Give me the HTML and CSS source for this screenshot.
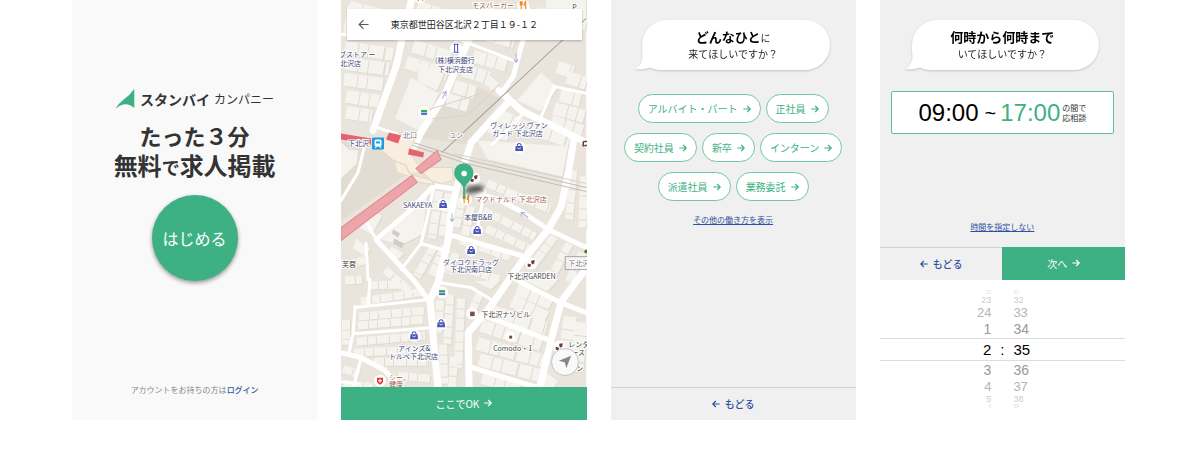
FILE: index.html
```html
<!DOCTYPE html>
<html lang="ja">
<head>
<meta charset="utf-8">
<meta name="viewport" content="width=device-width, initial-scale=1">
<title>スタンバイ カンパニー</title>
<link rel="stylesheet" href="styles.css">
</head>
<body>
<svg class="defs" aria-hidden="true">
  <symbol id="arrow" viewBox="0 0 8 8"><path d="M.3 4H7.2M4.2 1L7.2 4L4.2 7" fill="none" stroke="currentColor" stroke-width="1.2"/></symbol>
  <symbol id="arrow-back" viewBox="0 0 8 8"><path d="M7.7 4H.8M3.8 1L.8 4L3.8 7" fill="none" stroke="currentColor" stroke-width="1.2"/></symbol>
</svg>
<main class="screens">

  <section class="screen screen-start">
    <div class="intro">
      <div class="brand">
        <svg class="brand-mark" viewBox="0 0 20 20" aria-hidden="true"><path d="M19.3 0V19Q14.5 14.4 9 15.3Q5 16 .3 19.7Q3.500 14.500 9 10.200Q15 6 19.300 0Z" fill="#3eb184"/></svg>
        <span class="brand-name">スタンバイ</span>
        <span class="brand-sub">カンパニー</span>
      </div>
      <h1 class="headline"><span class="headline-top">たった３分</span><span>無料<small>で</small>求人掲載</span></h1>
      <button class="start" type="button">はじめる</button>
    </div>
    <p class="login">アカウントをお持ちの方は<a href="#login">ログイン</a></p>
  </section>

  <section class="screen screen-map">
    <div class="map">
      <svg class="map-canvas" viewBox="0 0 245 388" preserveAspectRatio="xMidYMid slice" role="img" aria-label="下北沢周辺の地図">
        <defs>
          <g id="bag"><circle r="6" fill="#fff"/><path d="M-3.500-1.500H3.500L4 3.500H-4Z" fill="#4b53b5"/><path d="M-1.800-1.500V-3Q0-5 1.800-3V-1.500" fill="none" stroke="#4b53b5"/><path d="M-1.800.2Q0 2.600 1.800.2" fill="none" stroke="#fff" stroke-width=".8"/></g>
          <g id="store"><circle r="6" fill="#fff"/><path d="M-3-2.500H3V0H-3Z" fill="#35a852"/><path d="M-3 0H3V2.500H-3Z" fill="#476ac6"/><path d="M-3 .2H3" stroke="#dce9ff" stroke-width=".7"/></g>
          <g id="food"><circle r="6" fill="#fff"/><path d="M-3-4V-1Q-2 .3-1-1V-4M-2-4V4M2.500 4V-4Q.5-2 1 0H2.500" fill="none" stroke="#f08a24" stroke-width="1.100"/></g>
          <g id="mask"><circle r="6" fill="#fff"/><path d="M-3.500 0L0 1L-1 3.500L-3.500 3.200ZM0-2.800L3.500-3.500L3 0L1 1L0-1Z" fill="#6d3c38"/></g>
        </defs>
        <rect width="245" height="388" fill="#e9e4dc"/>

        <path class="land" d="M0 140L22 137L52 150L65 175L0 222ZM92 108L132 85L160 100L125 145L78 138Z"/>

        <g class="houses">
          <path class="row-l" d="M8 8L60 21M4 48L52 55M4 64L48 70M3 80L42 85M5 97L38 102M5 113L31 117"/>
          <path class="row-l" d="M76 8L119 21M75 25L118 37M72 47L110 58M65 63L106 75"/>
          <path class="row-l" d="M134 12L176 23M132 31L173 43M132 57L165 66M122 71L148 79M113 87L134 93M106 100L127 106"/>
          <path class="row-l" d="M195 14L245 25M190 29L210 33M216 68L232 73M226 78L245 84M219 96L239 101M213 109L243 117M210 122L241 132M187 128L228 142"/>
          <path class="row-l" d="M158 116L184 128M149 127L168 136"/>
          <path class="row-m" d="M98 192L91 239M108 194L101 237M121 199L115 228M130 207L124 236"/>
          <path class="row-m" d="M146 184L209 210M142 211L194 237M145 229L190 250M119 241L170 258"/>
          <path class="row-m" d="M232 171L228 220M243 177L241 228M213 237L190 268M228 244L211 276M241 253L227 284"/>
          <path class="row-m" d="M6 266L25 260M4 281L21 280M27 286L64 285M44 270L71 294"/>
          <path class="row-m" d="M93 246L76 277M103 247L91 276M115 254L107 274M130 271L158 280"/>
          <path class="row-m" d="M20 302L84 292M18 317L83 311M17 326L83 320M16 342L84 336M13 353L83 350M33 362L87 362M57 376L89 379"/>
          <path class="row-m" d="M99 301L97 334M109 295L106 344M120 299L117 368M102 345L103 384M113 357L111 387"/>
          <path class="row-l" d="M151 312L205 329M140 326L200 345M136 344L204 362M138 360L199 376M141 378L182 388"/>
          <path class="row-l" d="M176 289L210 304M171 301L205 318M229 317L223 360M241 323L235 372M212 378L204 388"/>
          <path class="row-m" d="M5 320L5 345M2 369L18 375M3 384L31 388M139 293L128 318"/>
          <path class="block" d="M70 78L98 94L79 132L54 119ZM77 63L103 74L96 91L77 82ZM200 73L217 88L199 112L176 101ZM149 76L158 84L151 91L144 85ZM136 141L227 147L221 177L147 160ZM88 187L81 235L59 246L40 240L68 216ZM0 143L8 150L17 151L16 164L0 179ZM29 211L41 216L31 235L19 229ZM15 239L29 250L24 257L12 249ZM50 247L63 254L55 262L47 254ZM182 280L206 292L217 280L208 270ZM205 0H245V22L204 15ZM7 6L33 10L26 38L2 34ZM133 282L150 290L160 280Z"/>
        </g>

        <g class="roads">
          <path class="road-w" d="M71-2L61 40L55 67L43 100L32 131M128 40L118 62L103 97L80 133L73 147M158 91L180 111L245 143M233 138L227 173L220 207L207 230L180 263L147 310L127 333L128 390M244 270L220 302L210 340L198 390M165 105L130 143L123 165L115 190L110 213L107 240L97 283L89 300L93 347L97 390"/>
          <path class="road-m" d="M187 10L182 40L172 77L160 94M123 190L157 200L182 213L207 230L245 248M92 187L67 213L35 240L72 280L88 301M108 235L180 256M140 315L207 340M175 280L217 302L245 313M128 367L200 389M0 353L20 358L43 370L62 390M92 186L116 190"/>
          <path class="road-s" d="M0 35L60 40M115 39L172 61M245 94L213 87L200 117M32 127L74 140M0 201L17 173L23 149M93 187L80 244L60 270M80 244L107 252M97 283L130 288L150 300M14 308L88 300M29 280L27 305M14 307L12 334L8 353M12 334L90 328M0 382L17 384M20 358L12 390M35 240L24 220M25 244L27 280M182 114L167 130L151 145M144 190L136 229"/>
        </g>

        <path class="rail" d="M245 19L222 40L101 153"/>
        <path class="rail-light" d="M63 140L125 160L245 188M66 144L125 164L245 192"/>
        <path class="rail-faint" d="M153 91L126 116L91 119M88 110L140 94M112 154L245 184"/>
        <path class="station" d="M30 142L59 134L74 140L68 152L79 168L111 168L112 181L100 184L90 181L82 173L69 174L65 166L51 160Z"/>
        <path class="station" d="M53 161L64 166L69 175L89 180L93 185L79 183L68 177L56 173Z"/>
        <path class="platform" d="M0 228L71 176L76 183L0 241ZM75 169L96 151L100 160L80 174Z"/>
        <path class="platform-red" d="M0 134L30 139V145L0 140ZM48 133L60 136L57 144L45 140ZM68 149L83 153L82 158L67 155Z"/>
        <path d="M52 230L59 234L57 238L51 234ZM53 239L63 244L61 249L52 244Z" fill="#cfcdca"/>
        <g class="oneway"><path d="M175 54V63M173 60L175 63L177 60M101 99L105 92M101 94L105 92V97M111 214V222M109 219L111 222L113 219M180 213L187 218M180 217V213H184"/></g>

        <g class="pois">
          <use href="#bag" x="178" y="148"/><use href="#bag" x="102" y="205"/><use href="#bag" x="136" y="231"/><use href="#bag" x="130" y="251"/><use href="#bag" x="100" y="324"/><use href="#bag" x="73" y="336"/>
          <use href="#store" x="83" y="113"/><use href="#store" x="101" y="293"/>
          <use href="#food" x="182" y="6"/><use href="#food" x="79" y="-2"/><use href="#food" x="125" y="200"/>
          <use href="#mask" x="133" y="179"/><use href="#mask" x="190" y="264"/><use href="#mask" x="218" y="347"/>
          <circle cx="115" cy="49" r="6" fill="#fff"/><path d="M112.500 45H117.500M112.500 53H117.500M113.500 45.500V52.500M116.500 45.500V52.500" stroke="#4b53b5" fill="none"/>
          <circle cx="131" cy="314" r="6" fill="#fff"/><path d="M129 312H133.500V316.500H129Z" fill="#7a4b44"/>
          <circle cx="169" cy="337" r="5" fill="#fff"/><path d="M168 336H171V339H168Z" fill="#7a4b44"/>
          <circle cx="39" cy="381" r="6" fill="#fff"/><path d="M36 378H42V382Q41 384 39 385Q37 384 36 382Z" fill="#db3333"/><path d="M39 379V383M37 381H41" stroke="#fff"/>
          <rect x="31" y="138" width="12" height="12" rx="1" fill="#1a9de0"/><rect x="33.500" y="140" width="7" height="7" rx="1.500" fill="#fff"/><path d="M35 142H39V144H35Z" fill="#1a9de0"/><path d="M34 148.500L36 146.500M40 148.500L38 146.500" stroke="#fff"/>
          <rect x="224" y="257" width="24" height="13" fill="#f0efed" stroke="#aaa"/>
          <path d="M242 142H246M243 146H246M242 142V147" stroke="#6d3c38" stroke-width="1.500"/>
          <circle cx="245" cy="252" r="2" fill="#557a37"/>
        </g>

        <g class="labels">
          <text class="lb-food" x="131" y="9">モスバーガー</text>
          <text class="lb-dark" x="231" y="11">P</text>
          <text x="-2" y="58">ブストア ー</text><text x="-1" y="67">北沢店</text>
          <text x="94" y="64">(株)横浜銀行</text><text x="97" y="73">下北沢支店</text>
          <text class="lb-grey" x="62" y="139">北口</text><text class="lb-grey" x="108" y="139">ユン</text>
          <text x="149" y="129">ヴィレッジ ヴァン</text><text x="151" y="137">ガード 下北沢店</text>
          <text x="7" y="147">下北沢</text>
          <text x="62" y="208">SAKAEYA</text>
          <text class="lb-food" x="134" y="202">マクドナルド 下北沢店</text>
          <text x="123" y="220">本屋B&amp;B</text>
          <text x="102" y="265">ダイコクドラッグ</text><text x="109" y="272">下北沢南口店</text>
          <text class="lb-dark" x="1" y="267">芙蓉</text>
          <text class="lb-dark" x="166" y="279">下北沢GARDEN</text>
          <text class="lb-grey" x="227" y="266">下北沢</text>
          <text class="lb-dark" x="140" y="317">下北沢ナゾビル</text>
          <text class="lb-dark" x="152" y="351">Comodo・1</text>
          <text x="57" y="351">アインズ&amp;</text><text x="48" y="359">トルペ下北沢店</text>
          <text class="lb-dark" x="227" y="347">レンタ</text><text class="lb-dark" x="230" y="355">ース</text><text class="lb-dark" x="235" y="371">ン</text>
          <text class="lb-food" x="48" y="380">シー、</text><text class="lb-food" x="48" y="387">健康</text>
        </g>

        <ellipse class="pin-shadow" cx="133" cy="190" rx="10" ry="4" transform="rotate(-10 133 190)"/>
        <path d="M123 199V186" stroke="#3eb184" stroke-width="2"/>
        <path d="M122.500 190C122 183 113 181 113 173.500A9.700 9.700 0 0 1 132.400 173.500C132.400 181 124 183 123.500 190Z" fill="#3eb184"/>
        <circle cx="123" cy="174" r="2.800" fill="#fff"/>
      </svg>
      <div class="address">
        <button class="address-back" type="button" aria-label="戻る"><svg viewBox="0 0 12 12" aria-hidden="true"><path d="M11.500 6H1.200M6 1.200L1.200 6L6 10.800" fill="none" stroke="#5f5558" stroke-width="1.200"/></svg></button>
        <input class="address-input" type="text" aria-label="住所" value="東京都世田谷区北沢２丁目１９-１２">
      </div>
      <button class="locate" type="button" aria-label="現在地"><svg viewBox="0 0 14 14" aria-hidden="true"><path d="M13.200.8L8.300 13L6.800 7.200L.8 5.700Z" fill="#85858a"/></svg></button>
    </div>
    <button class="bar bar-primary" type="button">ここでOK<svg class="ico" aria-hidden="true"><use href="#arrow"/></svg></button>
  </section>

  <section class="screen screen-form">
    <div class="form-body">
      <h2 class="bubble">
        <svg class="bubble-tail" viewBox="0 0 32 24" aria-hidden="true"><path d="M7 0L7.500 11Q6.500 19 0 21.500Q7 23.500 15 20.500Q21 23.500 32 23L32 0Z" fill="#fff"/></svg>
        <span class="bubble-text"><span><strong>どんなひと</strong>に</span><span>来てほしいですか？</span></span>
      </h2>
      <div class="choices">
        <button class="pill" type="button">アルバイト・パート<svg class="ico" aria-hidden="true"><use href="#arrow"/></svg></button>
        <button class="pill" type="button">正社員<svg class="ico" aria-hidden="true"><use href="#arrow"/></svg></button>
        <button class="pill" type="button">契約社員<svg class="ico" aria-hidden="true"><use href="#arrow"/></svg></button>
        <button class="pill" type="button">新卒<svg class="ico" aria-hidden="true"><use href="#arrow"/></svg></button>
        <button class="pill" type="button">インターン<svg class="ico" aria-hidden="true"><use href="#arrow"/></svg></button>
        <button class="pill" type="button">派遣社員<svg class="ico" aria-hidden="true"><use href="#arrow"/></svg></button>
        <button class="pill" type="button">業務委託<svg class="ico" aria-hidden="true"><use href="#arrow"/></svg></button>
      </div>
      <a class="sublink" href="#more">その他の働き方を表示</a>
    </div>
    <button class="bar bar-back" type="button"><svg class="ico" aria-hidden="true"><use href="#arrow-back"/></svg>もどる</button>
  </section>

  <section class="screen screen-form">
    <div class="form-body form-time">
      <h2 class="bubble">
        <svg class="bubble-tail" viewBox="0 0 32 24" aria-hidden="true"><path d="M7 0L7.500 11Q6.500 19 0 21.500Q7 23.500 15 20.500Q21 23.500 32 23L32 0Z" fill="#fff"/></svg>
        <span class="bubble-text"><span><strong>何時から何時まで</strong></span><span>いてほしいですか？</span></span>
      </h2>
      <div class="range">
        <span class="range-time">09:00</span>
        <span class="range-sep">~</span>
        <span class="range-time range-active">17:00</span>
        <span class="range-note">の間で<br>応相談</span>
      </div>
      <a class="sublink sublink-end" href="#any">時間を指定しない</a>
    </div>
    <div class="bar-pair">
      <button class="bar bar-back" type="button"><svg class="ico" aria-hidden="true"><use href="#arrow-back"/></svg>もどる</button>
      <button class="bar bar-primary" type="button">次へ<svg class="ico" aria-hidden="true"><use href="#arrow"/></svg></button>
    </div>
    <div class="picker" role="group" aria-label="時刻">
      <div class="tick tick-4"><span>22</span><span>31</span></div>
      <div class="tick tick-3"><span>23</span><span>32</span></div>
      <div class="tick tick-2"><span>24</span><span>33</span></div>
      <div class="tick tick-1"><span>1</span><span>34</span></div>
      <div class="tick tick-now"><span>2</span><b>:</b><span>35</span></div>
      <div class="tick tick-1"><span>3</span><span>36</span></div>
      <div class="tick tick-2"><span>4</span><span>37</span></div>
      <div class="tick tick-3"><span>5</span><span>38</span></div>
      <div class="tick tick-4"><span>6</span><span>39</span></div>
    </div>
  </section>

</main>
</body>
</html>
```
FILE: styles.css
```css
:root {
  --green: #3eb184;
  --blue: #2f52a0;
  --line: #dcdcdc;
}
* { box-sizing: border-box; }
body {
  margin: 0;
  background: #fff;
  color: #333;
  font: 10px/1.5 "Noto Sans CJK JP", sans-serif;
}
button, input { font: inherit; color: inherit; border: 0; padding: 0; margin: 0; background: none; }
button { cursor: pointer; }
h1, h2, p { margin: 0; font-size: 10px; font-weight: 400; }
a { color: var(--blue); }
.defs { position: absolute; width: 0; height: 0; }
.ico { width: 8px; height: 8px; flex: none; }

.screens {
  display: grid;
  grid-template-columns: repeat(4, minmax(0, 1fr));
  gap: 24px;
  padding: 0 75px 48px 72px;
}
.screen { display: flex; flex-direction: column; min-height: 420px; }

/* start */
.screen-start { background: #f9f9f9; align-items: center; justify-content: space-between; padding: 87px 0 22px; }
.intro { display: flex; flex-direction: column; align-items: center; }
.brand { display: flex; align-items: center; line-height: 24px; }
.brand-mark { width: 20px; height: 20px; margin-right: 5px; }
.brand-name { font-size: 14px; font-weight: 700; margin-right: 4px; }
.brand-sub { font-size: 12px; }
.headline { display: flex; flex-direction: column; align-items: center; margin-top: 10px; font-size: 24px; font-weight: 700; line-height: 29px; }
.headline-top { font-size: 22px; }
.headline small { font-size: 18px; }
.start {
  width: 86px; height: 86px; margin-top: 13px; border-radius: 50%;
  background: var(--green); color: #fff; font-size: 16px;
  box-shadow: 0 2px 4px rgba(0, 0, 0, .4);
}
.login { font-size: 8px; line-height: 16px; color: #888; }
.login a { font-weight: 500; text-decoration: none; }

/* map */
.map { position: relative; flex: 1; overflow: hidden; }
.map-canvas { position: absolute; inset: 0; width: 100%; height: 100%; }
.land { fill: #e2dcd2; }
.houses { fill: none; stroke: #f5f3ed; filter: drop-shadow(1px 1px 0 #dfdad1); }
.row-l { stroke-width: 13; stroke-dasharray: 13 1 9 1 15 2; }
.row-m { stroke-width: 8; stroke-dasharray: 10 1 8 1 12 1; }
.block { fill: #f5f3ed; stroke: none; }
.roads { fill: none; stroke: #fff; stroke-linejoin: round; stroke-linecap: round; }
.road-w { stroke-width: 7; }
.road-m { stroke-width: 5; }
.road-s { stroke-width: 3; }
.rail { fill: none; stroke: #a5a29e; stroke-width: 1; }
.rail-light { fill: none; stroke: #c2beb8; stroke-width: 1; }
.rail-faint { fill: none; stroke: #d8d3cc; stroke-width: 1; }
.station { fill: #f8eee0; stroke: #e6d8c5; stroke-width: 1; }
.platform { fill: #eda5aa; stroke: #df8990; stroke-width: 1; }
.platform-red { fill: #e5636c; }
.oneway { fill: none; stroke: #a9b3d2; stroke-width: 1; }
.labels { font-size: 7px; fill: #414575; stroke: #fff; stroke-width: 2px; stroke-linejoin: round; paint-order: stroke; }
.lb-food { fill: #a2594d; }
.lb-dark { fill: #444; }
.lb-grey { fill: #77777c; }
.pin-shadow { fill: #333; opacity: .8; filter: blur(2px); }
.address {
  position: absolute; top: 9px; left: 6px; right: 5px;
  display: grid; grid-template-columns: 32px 1fr 32px; align-items: center; height: 31px;
  background: #fff; box-shadow: 0 1px 2px rgba(0, 0, 0, .25);
}
.address-back { display: grid; place-items: center; height: 31px; }
.address-back svg { width: 11px; height: 11px; }
.address-input { width: 100%; min-width: 0; font-size: 9px; text-align: center; color: #222; }
.locate {
  position: absolute; right: 8px; bottom: 11px; display: grid; place-items: center;
  width: 28px; height: 28px; border: 1px solid #c4c4c6; border-radius: 50%; background: #f9f9f9;
}
.locate svg { width: 14px; height: 14px; }

/* bottom bars */
.bar { display: flex; align-items: center; justify-content: center; gap: 5px; width: 100%; height: 33px; padding-bottom: 1px; }
.bar-primary { background: var(--green); color: #fff; }
.bar-back { border-top: 1px solid #d0d0d4; color: var(--blue); font-weight: 500; }
.bar-pair { display: grid; grid-template-columns: 1fr 1fr; background: #f0f0f0; }

/* questions */
.screen-form { background: #f0f0f0; }
.form-body { display: flex; flex-direction: column; align-items: center; flex: 1; padding: 20px 11px; }
.bubble { position: relative; width: 84%; margin-left: 6px; filter: drop-shadow(0 1px 1px rgba(0, 0, 0, .18)); }
.bubble-text {
  display: flex; flex-direction: column; align-items: center; justify-content: center;
  height: 50px; padding-right: 6px; border-radius: 25px; background: #fff; color: #222; line-height: 15px;
}
.bubble-text > span:first-child { line-height: 16px; }
.bubble strong { font-size: 13px; font-weight: 700; color: #000; }
.bubble-tail { position: absolute; left: -7px; bottom: -1px; width: 32px; height: 24px; }
.choices { display: flex; flex-wrap: wrap; justify-content: center; gap: 10px 5px; margin-top: 24px; }
.pill {
  display: flex; align-items: center; gap: 5px; height: 29px; padding: 0 9px;
  border: 1px solid #72c6a6; border-radius: 15px; background: #fff; color: var(--green);
}
.sublink { margin-top: 12px; font-size: 8px; line-height: 14px; }
.form-time { padding-bottom: 13px; }
.range {
  display: flex; align-items: center; justify-content: center; align-self: stretch; height: 43px; margin-top: 21px;
  border: 1px solid #5fbf9a; border-radius: 2px; background: #fff;
}
.range-time { font: 24px/1 "Liberation Sans", sans-serif; color: #000; }
.range-sep { margin: 0 4px 0 6px; font: 20px/1 "Liberation Sans", sans-serif; color: #000; }
.range .range-active { color: var(--green); }
.range-note { margin-left: 2px; font-size: 8px; line-height: 10px; }
.sublink-end { margin-top: auto; }

/* time wheel */
.picker { padding: 10px 0 11px; background: #fff; font-family: "Liberation Sans", sans-serif; }
.tick { display: grid; grid-template-columns: 1fr 22px 1fr; align-items: center; }
.tick span:first-child { grid-column: 1; text-align: right; }
.tick span:last-child { grid-column: 3; }
.tick b { text-align: center; font-weight: 400; }
.tick-now { height: 23px; border: solid var(--line); border-width: 1px 0; color: #000; font-size: 15px; }
.tick-1 { height: 18px; color: #999; font-size: 14px; line-height: 18px; }
.tick-2 { height: 15px; color: #b5b5b5; font-size: 13px; line-height: 15px; }
.tick-3 { height: 10px; color: #cdcdcd; font-size: 9px; line-height: 10px; }
.tick-4 { height: 5px; color: #e2e2e2; font-size: 5px; line-height: 5px; }
```
